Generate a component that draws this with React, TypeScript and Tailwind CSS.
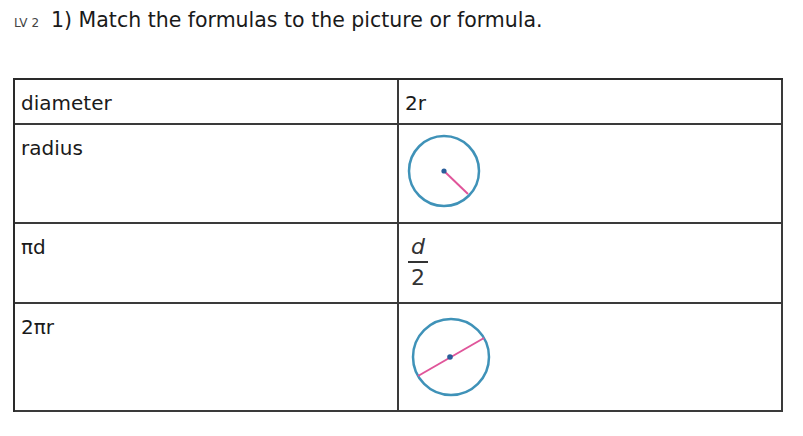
import React from 'react';

const font = { fontFamily: '"DejaVu Sans", "Liberation Sans", sans-serif' };

// radius picture: circle with a pink radius line
const RadiusPicture: React.FC = () => (
  <svg width="80" height="80" viewBox="0 0 80 80" className="block">
    <circle cx="40" cy="40" r="35" fill="none" stroke="#3f92b8" strokeWidth="2.5" />
    <line x1="40" y1="40" x2="64" y2="63" stroke="#e0559a" strokeWidth="2" />
    <circle cx="40" cy="40" r="2.6" fill="#2a5e9a" />
  </svg>
);

// diameter picture: circle with a pink chord through the centre
const DiameterPicture: React.FC = () => (
  <svg width="86" height="86" viewBox="0 0 86 86" className="block">
    <circle cx="43" cy="43" r="38" fill="none" stroke="#3f92b8" strokeWidth="2.5" />
    <line x1="10" y1="62" x2="76" y2="24" stroke="#e0559a" strokeWidth="2" />
    <circle cx="42" cy="43" r="2.8" fill="#2a5e9a" />
  </svg>
);

const Fraction: React.FC = () => (
  <div className="flex flex-col items-center w-[20px] leading-none text-[22px] text-[#333]">
    <span className="italic">d</span>
    <span className="block w-full h-[2px] bg-[#333] mt-[3px] mb-[4px]" />
    <span>2</span>
  </div>
);

interface Row {
  left: string;
  right: React.ReactNode;
  height: string;
  pad: string;
}

const rows: Row[] = [
  {
    left: 'diameter',
    right: <span className="text-[20px] leading-[24px]">2r</span>,
    height: 'h-[45px]',
    pad: 'pl-[6px] pt-[11px]',
  },
  { left: 'radius', right: <RadiusPicture />, height: 'h-[99px]', pad: 'pl-[5px] pt-[6px]' },
  { left: 'πd', right: <Fraction />, height: 'h-[80px]', pad: 'pl-[9px] pt-[12px]' },
  { left: '2πr', right: <DiameterPicture />, height: 'h-[108px]', pad: 'pl-[9px] pt-[10px]' },
];

export default function App() {
  return (
    <div className="w-[803px] h-[436px] bg-white text-[#1a1a1a] overflow-hidden" style={font}>
      <div className="flex items-baseline pl-[14px] pt-[5px] h-[78px]">
        <span className="text-[12px] text-[#444] mr-[12px]">LV 2</span>
        <span className="text-[20.5px]">1) Match the formulas to the picture or formula.</span>
      </div>
      <div className="ml-[13px] w-[770px] border-t-2 border-l-2 border-[#2a2a2a]">
        {rows.map((row) => (
          <div key={row.left} className={`grid grid-cols-[384px_384px] ${row.height}`}>
            <div className="border-r-2 border-b-2 border-[#3a3a3a] pl-[6px] pt-[11px] text-[20px] leading-[24px]">
              {row.left}
            </div>
            <div className={`border-r-2 border-b-2 border-[#3a3a3a] ${row.pad}`}>{row.right}</div>
          </div>
        ))}
      </div>
    </div>
  );
}
